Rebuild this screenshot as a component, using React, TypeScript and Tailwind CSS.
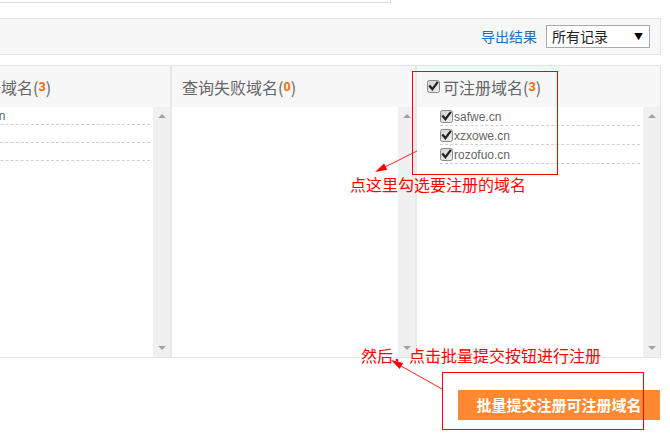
import React from "react";

const cjk = "font-['Noto_Sans_CJK_SC','Noto_Sans',sans-serif]";
const latin = "font-['Liberation_Sans',Arial,sans-serif]";

function Check() {
  return (
    <svg width="13" height="13" viewBox="0 0 13 13" className="shrink-0">
      <defs>
        <linearGradient id="cb" x1="0" y1="0" x2="1" y2="1">
          <stop offset="0" stopColor="#d2d2d2" />
          <stop offset="1" stopColor="#eeeeee" />
        </linearGradient>
      </defs>
      <rect x="0.5" y="0.5" width="12" height="12" rx="2" fill="url(#cb)" stroke="#8a8a8a" />
      <path d="M3 6.3 L5.4 9.2 L10.2 2.8" fill="none" stroke="#222" strokeWidth="2.2" strokeLinecap="square" />
    </svg>
  );
}

function Scrollbar() {
  return (
    <div className="w-[17px] h-full bg-[#f0f0f0] flex flex-col justify-between items-center pt-[7px] pb-[7px]">
      <div className="w-0 h-0 border-x-[4px] border-x-transparent border-b-[4px] border-b-[#a3a3a3]" />
      <div className="w-0 h-0 border-x-[4px] border-x-transparent border-t-[4px] border-t-[#a3a3a3]" />
    </div>
  );
}

type ColProp = {
  title: string,
  count: number,
  items: string[],
  checkable: boolean,
};

function Column({ title, count, items, checkable }: ColProp) {
  return (
    <div className="w-[243px] flex flex-col">
      <div className={`h-[41px] bg-[#f7f7f7] flex items-center pl-[10px] text-[16px] text-[#666] ${cjk}`}>
        {checkable && <span className="mr-[3px] flex"><Check /></span>}
        <span>{title}(</span>
        <span className={`text-[#ff6600] font-bold text-[13px] ${latin}`}>{count}</span>
        <span>)</span>
      </div>
      <div className="h-[250px] flex bg-white">
        <div className="flex-1 pl-[23px] pr-[3px]">
          {items.map((d) => (
            <div
              key={d}
              className={`${checkable ? "h-[19px]" : "h-[18px]"} border-b border-dashed border-[#cfcfcf] flex items-center text-[12px] text-[#666] ${latin}`}
            >
              {checkable && <Check />}
              <span className={checkable ? "ml-[1px] pt-[2px]" : "pt-[1px]"}>{d}</span>
            </div>
          ))}
        </div>
        <Scrollbar />
      </div>
    </div>
  );
}

export default function App() {
  return (
    <div className="relative w-[670px] h-[446px] overflow-hidden bg-white">
      <div className="h-[3px] w-[391px] border-b border-r border-[#dcdcdc]" />

      <div className="mt-[15px] h-[37px] w-[661px] border-y border-r border-[#e3e3e3] bg-[#f7f7f7] flex items-center justify-end pr-[10px]">
        <a className={`text-[14px] text-[#1f6fc5] mr-[9px] ${cjk}`}>导出结果</a>
        <div className={`h-[23px] w-[104px] border border-[#a9a9a9] bg-white flex items-center justify-between pl-[5px] pr-[6px] text-[14px] text-[#222] ${cjk}`}>
          <span>所有记录</span>
          <span className="text-[9px] text-black">▼</span>
        </div>
      </div>

      <div className="mt-[10px] ml-[-73px] w-[734px] flex border-y border-r border-[#e5e5e5] bg-[#e8e8e8]">
        <Column title="已被注册域名" count={3} items={["yahooo.cn", "qq.cn", "163.cn"]} checkable={false} />
        <div className="w-[2px]" />
        <Column title="查询失败域名" count={0} items={[]} checkable={false} />
        <div className="w-[2px]" />
        <Column title="可注册域名" count={3} items={["safwe.cn", "xzxowe.cn", "rozofuo.cn"]} checkable={true} />
      </div>

      <div className="w-[660px] flex justify-end mt-[32px]">
        <button className={`h-[30px] w-[202px] bg-[#ff8832] text-white font-bold text-[15px] ${cjk}`}>
          批量提交注册可注册域名
        </button>
      </div>

      {/* annotations */}
      <div className="absolute left-[412px] top-[71px] w-[146px] h-[104px] border border-[#ff0000]" />
      <div className="absolute left-[442px] top-[372px] w-[202px] h-[58px] border border-[#ff0000]" />
      <div className={`absolute left-[350px] top-[176px] text-[16px] leading-[16px] text-[#ff0000] whitespace-nowrap ${cjk}`}>
        点这里勾选要注册的域名
      </div>
      <div className={`absolute left-[361px] top-[347px] text-[16px] leading-[16px] text-[#ff0000] whitespace-nowrap ${cjk}`}>
        然后，点击批量提交按钮进行注册
      </div>
      <svg className="absolute left-0 top-0 pointer-events-none" width="670" height="446">
        <line x1="417" y1="151" x2="385" y2="167" stroke="#ff2020" strokeWidth="1" />
        <polygon points="375,172 387.3,169.7 384.1,163.5" fill="#ff0000" />
        <line x1="442" y1="389" x2="401" y2="366" stroke="#ff2020" strokeWidth="1" />
        <polygon points="391,360 403.1,362.9 399.7,369" fill="#ff0000" />
      </svg>
    </div>
  );
}
